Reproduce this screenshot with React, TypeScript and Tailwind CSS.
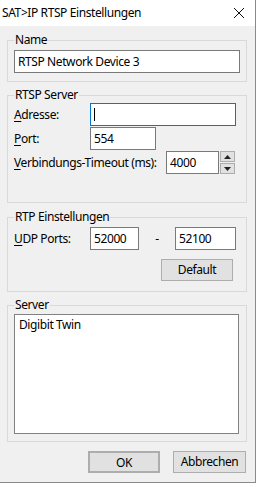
import React from "react";

const font = { fontFamily: '"Noto Sans", "Segoe UI", sans-serif' };

function Mn({ c, rest }: { c: string; rest: string }) {
  return (
    <span>
      <span className="underline underline-offset-2">{c}</span>
      {rest}
    </span>
  );
}

function Group({
  title,
  className = "",
  children,
}: {
  title: string;
  className?: string;
  children: React.ReactNode;
}) {
  return (
    <fieldset
      className={`ml-[7px] w-[240px] border border-[#d9d9d9] pl-[6px] ${className}`}
    >
      <legend className="px-[1px] text-[12px] leading-[16px]">{title}</legend>
      {children}
    </fieldset>
  );
}

const box = "h-[23px] border border-[#7a7a7a] bg-white px-[3px] text-[12px] leading-[21px]";
const btn = "h-[22px] border border-[#adadad] bg-[#e1e1e1] text-[12px] leading-[20px] text-center";

export default function App() {
  return (
    <div className="h-[487px] w-[258px] whitespace-nowrap bg-white tracking-[-0.4px] text-black" style={font}>
      <div className="flex h-[483px] w-[256px] flex-col border-r border-b border-[#8a8a8a] bg-[#f0f0f0]">
        <div className="flex h-[26px] items-center justify-between bg-white pl-[2px] pr-[10px]">
          <span className="text-[12px]">SAT&gt;IP RTSP Einstellungen</span>
          <svg width="12" height="12" viewBox="0 0 12 12">
            <path d="M1 1 L11 11 M11 1 L1 11" stroke="#111" strokeWidth="1" />
          </svg>
        </div>

        <Group title="Name" className="mt-[6px] pb-[8px]">
          <div className={`${box} mt-[2px] h-[22px] w-[226px] leading-[20px]`}>RTSP Network Device 3</div>
        </Group>

        <Group title="RTSP Server" className="mt-[5px] pb-[28px]">
          <div className="flex flex-col gap-[1px]">
            <div className="flex h-[23px] items-center">
              <span className="w-[76px] text-[12px]">
                <Mn c="A" rest="dresse:" />
              </span>
              <div className={`${box} flex w-[146px] items-center border-[#0078d7]`}>
                <div className="h-[13px] w-px bg-black" />
              </div>
            </div>
            <div className="flex h-[23px] items-center">
              <span className="w-[76px] text-[12px]">
                <Mn c="P" rest="ort:" />
              </span>
              <div className={`${box} w-[66px]`}>554</div>
            </div>
            <div className="flex h-[23px] items-center">
              <span className="w-[152px] text-[12px]">
                <Mn c="V" rest="erbindungs-Timeout (ms):" />
              </span>
              <div className={`${box} w-[53px]`}>4000</div>
              <div className="ml-[1px] flex h-[23px] w-[15px] flex-col gap-px">
                <div className="flex h-[11px] items-center justify-center border border-[#adadad] bg-[#e1e1e1]">
                  <svg width="7" height="4" viewBox="0 0 7 4">
                    <path d="M0 4 L3.5 0 L7 4 Z" fill="#222" />
                  </svg>
                </div>
                <div className="flex h-[11px] items-center justify-center border border-[#adadad] bg-[#e1e1e1]">
                  <svg width="7" height="4" viewBox="0 0 7 4">
                    <path d="M0 0 L3.5 4 L7 0 Z" fill="#222" />
                  </svg>
                </div>
              </div>
            </div>
          </div>
        </Group>

        <Group title="RTP Einstellungen" className="mt-[6px] pb-[10px]">
          <div className="mt-[2px] flex h-[23px] items-center">
            <span className="w-[76px] text-[12px]">
              <Mn c="U" rest="DP Ports:" />
            </span>
            <div className={`${box} w-[49px]`}>52000</div>
            <span className="w-[36px] text-center text-[12px]">-</span>
            <div className={`${box} w-[61px]`}>52100</div>
          </div>
          <div className="mt-[9px] flex">
            <div className={`${btn} ml-[147px] h-[21px] w-[72px]`}>Default</div>
          </div>
        </Group>

        <Group title="Server" className="mt-[5px] pb-[7px]">
          <div className="mt-[1px] h-[120px] w-[225px] border border-[#828282] bg-white px-[4px] pt-[1px] text-[12px] leading-[18px]">
            Digibit Twin
          </div>
        </Group>

        <div className="mt-[9px] flex gap-[13px] pl-[88px]">
          <div className={`${btn} w-[72px] border-2 border-[#0078d7] leading-[18px]`}>OK</div>
          <div className={`${btn} w-[73px]`}>Abbrechen</div>
        </div>
      </div>
    </div>
  );
}
